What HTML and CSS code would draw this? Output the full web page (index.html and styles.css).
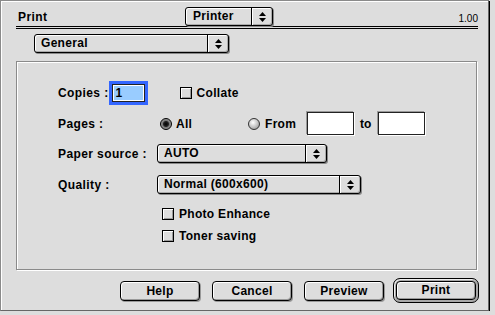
FILE: index.html
```html
<!DOCTYPE html>
<html lang="en">
<head>
    <meta charset="UTF-8">
    <title>Print</title>
    <link rel="stylesheet" href="styles.css">
</head>
<body>
    <div class="window">
        <div class="header">
            <span class="title">Print</span>
            <div class="popup popup-printer">
                <span class="popup-text">Printer</span>
                <span class="popup-arrow"><svg width="7" height="10" viewBox="0 0 7 10"><path d="M3.5 0L7 4H0z M0 6H7L3.5 10z"/></svg></span>
            </div>
            <span class="version">1.00</span>
        </div>

        <div class="popup popup-general">
            <span class="popup-text">General</span>
            <span class="popup-arrow"><svg width="7" height="10" viewBox="0 0 7 10"><path d="M3.5 0L7 4H0z M0 6H7L3.5 10z"/></svg></span>
        </div>

        <div class="group">
            <div class="row row-copies">
                <span class="label">Copies :</span>
                <span class="field field-copies"><span class="sel">1</span></span>
                <span class="check check-collate"><span class="box"></span>Collate</span>
            </div>

            <div class="row row-pages">
                <span class="label label-col">Pages :</span>
                <span class="option option-all"><span class="radio on"></span>All</span>
                <span class="option option-from"><span class="radio"></span>From</span>
                <span class="field field-page"></span>
                <span class="to">to</span>
                <span class="field field-page"></span>
            </div>

            <div class="row row-paper">
                <span class="label label-col">Paper source :</span>
                <div class="popup popup-paper">
                    <span class="popup-text">AUTO</span>
                    <span class="popup-arrow"><svg width="7" height="10" viewBox="0 0 7 10"><path d="M3.5 0L7 4H0z M0 6H7L3.5 10z"/></svg></span>
                </div>
            </div>

            <div class="row row-quality">
                <span class="label label-col">Quality :</span>
                <div class="popup popup-quality">
                    <span class="popup-text">Normal (600x600)</span>
                    <span class="popup-arrow"><svg width="7" height="10" viewBox="0 0 7 10"><path d="M3.5 0L7 4H0z M0 6H7L3.5 10z"/></svg></span>
                </div>
            </div>

            <div class="row row-photo">
                <span class="check check-indent"><span class="box"></span>Photo Enhance</span>
            </div>

            <div class="row row-toner">
                <span class="check check-indent"><span class="box"></span>Toner saving</span>
            </div>
        </div>

        <div class="buttons">
            <span class="button">Help</span>
            <span class="button">Cancel</span>
            <span class="button">Preview</span>
            <span class="default-ring"><span class="button">Print</span></span>
        </div>
    </div>
</body>
</html>
```

FILE: styles.css
```css
body{
    margin: 0;
    background: #dddddd;
    font-family: "Liberation Sans", Arial, sans-serif;
    font-size: 12px;
    font-weight: bold;
    color: #000;
}

.window{
    box-sizing: border-box;
    width: 489px;
    height: 311px;
    background: #dddddd;
    border-top: 1px solid #8a8a8a;
    border-left: 1px solid #8a8a8a;
    border-right: 1px solid #666;
    border-bottom: 1px solid #666;
    box-shadow: 1px 1px 0 #000, inset 1px 1px 0 #fff;
}

/* header with the double rule */
.header{
    display: grid;
    grid-template-columns: 169px 88px 1fr auto;
    align-items: end;
    margin: 6px 0 0 15px;
    width: 462px;
    height: 19px;
    border-bottom: 3px double #000;
}

.title{
    padding-left: 2px;
    letter-spacing: 0.4px;
    line-height: 14px;
    padding-bottom: 2px;
}

.version{
    grid-column: 4;
    font-weight: normal;
    font-size: 10px;
    line-height: 10px;
    padding-bottom: 2px;
}

/* popup menus */
.popup{
    box-sizing: border-box;
    display: flex;
    height: 19px;
    border: 1px solid #000;
    border-radius: 3px;
    background: #dddddd;
    box-shadow: inset 1px 1px 0 #fff, inset -1px -1px 0 #aaa, 1px 1px 0 #888;
}

.popup-text{
    flex: 1;
    padding-left: 6px;
    line-height: 17px;
    letter-spacing: 0.3px;
    white-space: nowrap;
    overflow: hidden;
}

.popup-arrow{
    width: 20px;
    display: flex;
    align-items: center;
    justify-content: center;
    border-left: 1px solid #000;
    box-shadow: inset 1px 0 0 #fff;
}

.popup-printer{
    grid-column: 2;
    width: 88px;
}

.popup-printer .popup-text{
    padding-left: 7px;
}

.popup-general{
    width: 195px;
    margin: 5px 0 0 33px;
}

.popup-paper{
    width: 170px;
}

.popup-quality{
    width: 204px;
}

/* group box */
.group{
    box-sizing: border-box;
    width: 461px;
    height: 209px;
    margin: 8px 0 0 15px;
    padding: 19px 0 0 41px;
    border: 1px solid #8a8a8a;
    box-shadow: 1px 1px 0 #fff, inset 1px 1px 0 #fff;
}

.row{
    display: flex;
    align-items: center;
    white-space: nowrap;
}

.label{
    letter-spacing: 0.4px;
}

.label-col{
    width: 99px;
}

.row-copies{
    height: 24px;
}

.row-pages{
    height: 23px;
    margin-top: 7px;
}

.row-paper{
    height: 19px;
    margin-top: 9px;
}

.row-quality{
    height: 19px;
    margin-top: 12px;
}

.row-photo{
    height: 16px;
    margin-top: 12px;
}

.row-toner{
    height: 16px;
    margin-top: 6px;
}

/* edit text fields */
.field{
    box-sizing: border-box;
    display: inline-block;
    background: #fff;
    border: 1px solid #222;
    box-shadow: -1px -1px 0 #999, 1px 1px 0 #fff;
}

.field-copies{
    width: 33px;
    height: 18px;
    margin-left: 3px;
    padding: 1px;
    box-shadow: 0 0 0 3px #3366ff;
}

.sel{
    display: block;
    height: 14px;
    background: #99ccff;
    padding-left: 2px;
    line-height: 15px;
}

.field-page{
    width: 47px;
    height: 23px;
}

.to{
    width: 18px;
    margin-left: 6px;
}

/* checkboxes and radios */
.check{
    display: flex;
    align-items: center;
    gap: 5px;
    letter-spacing: 0.3px;
}

.check-collate{
    margin-left: 35px;
}

.check-indent{
    margin-left: 104px;
}

.box{
    box-sizing: border-box;
    width: 12px;
    height: 12px;
    border: 1px solid #000;
    background: #dddddd;
    box-shadow: inset 1px 1px 0 #fff, inset -1px -1px 0 #999;
}

.option{
    display: flex;
    align-items: center;
    gap: 4px;
    letter-spacing: 0.3px;
}

.option-all{
    margin-left: 3px;
    width: 88px;
}

.option-from{
    width: 59px;
    gap: 5px;
}

.radio{
    box-sizing: border-box;
    width: 12px;
    height: 12px;
    border-radius: 50%;
    border: 1px solid #333;
    background: radial-gradient(circle at 40% 35%, #fff 0, #ccc 45%, #888 100%);
}

.radio.on{
    border-color: #000;
    background: radial-gradient(circle at 50% 50%, #000 0, #222 2.5px, #777 3.5px, #999 5px);
}

/* push buttons */
.buttons{
    display: flex;
    align-items: center;
    height: 25px;
    margin-top: 8px;
    padding-left: 119px;
}

.button{
    box-sizing: border-box;
    display: inline-block;
    width: 80px;
    height: 20px;
    margin-right: 12px;
    border: 1px solid #000;
    border-radius: 4px;
    background: #dddddd;
    box-shadow: inset 1px 1px 0 #fff, inset -1px -1px 0 #999, 1px 1px 0 #999;
    text-align: center;
    line-height: 18px;
    letter-spacing: 0.3px;
}

.buttons > .button:nth-child(3){
    margin-right: 9px;
}

.default-ring{
    box-sizing: border-box;
    display: inline-block;
    width: 86px;
    height: 25px;
    padding: 2px;
    border: 1px solid #000;
    border-radius: 7px;
    background: #a8a8a8;
    box-shadow: inset 1px 1px 0 #eee;
}

.default-ring .button{
    display: block;
    width: 80px;
    height: 19px;
    margin: 0;
    line-height: 17px;
    box-shadow: inset 1px 1px 0 #fff, inset -1px -1px 0 #999;
}
```
